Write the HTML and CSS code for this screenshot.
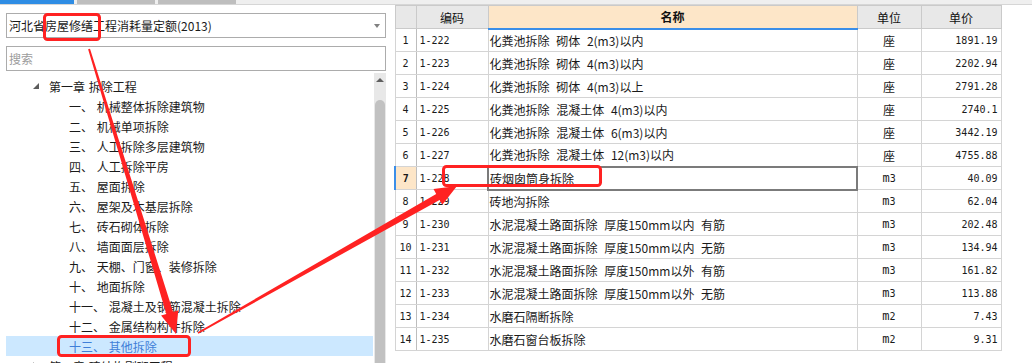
FILE: index.html
```html
<!DOCTYPE html>
<html lang="zh">
<head>
  <meta charset="UTF-8" />
  <title>定额库</title>
  <link rel="stylesheet" href="styles.css">
</head>
<body>

<div class="tabs">
  <span class="tab active"></span>
  <span class="tab"></span>
  <span class="tab"></span>
</div>

<div class="main">
  <!-- 左侧：定额库 + 章节树 -->
  <div class="left">
    <div class="combo">河北省房屋修缮工程消耗量定额(2013)<span class="combo-arrow"></span></div>
    <input class="search" type="text" placeholder="搜索">
    <div class="tree-wrap">
      <ul class="tree">
        <li class="chapter"><span class="toggle open"></span>第一章 拆除工程</li>
        <li class="item">一、 机械整体拆除建筑物</li>
        <li class="item">二、 机械单项拆除</li>
        <li class="item">三、 人工拆除多层建筑物</li>
        <li class="item">四、 人工拆除平房</li>
        <li class="item">五、 屋面拆除</li>
        <li class="item">六、 屋架及木基层拆除</li>
        <li class="item">七、 砖石砌体拆除</li>
        <li class="item">八、 墙面面层拆除</li>
        <li class="item">九、 天棚、门窗、装修拆除</li>
        <li class="item">十、 地面拆除</li>
        <li class="item">十一、 混凝土及钢筋混凝土拆除</li>
        <li class="item">十二、 金属结构构件拆除</li>
        <li class="item selected">十三、 其他拆除</li>
        <li class="chapter"><span class="toggle"></span>第二章 砖结构剔砌工程</li>
      </ul>
      <div class="vscroll">
        <span class="up"></span>
        <span class="thumb"></span>
      </div>
    </div>
  </div>

  <!-- 右侧：子目列表 -->
  <div class="right">
    <table class="grid">
      <colgroup>
        <col style="width:21px">
        <col style="width:72px">
        <col style="width:369px">
        <col style="width:64px">
        <col style="width:80px">
      </colgroup>
      <thead>
        <tr>
          <th></th>
          <th>编码</th>
          <th class="sel-col">名称</th>
          <th>单位</th>
          <th>单价</th>
        </tr>
      </thead>
      <tbody id="filas"></tbody>
    </table>
  </div>
</div>

<!-- 红色标注 -->
<svg class="marks" width="1032" height="363" viewBox="0 0 1032 363">
  <g fill="none" stroke="#ff2222" stroke-width="3">
    <rect x="44.5" y="14.5" width="55" height="25" rx="3" />
    <rect x="58.5" y="336.5" width="131" height="19" rx="3" />
    <rect x="443.5" y="166.5" width="157" height="19" rx="3" />
  </g>
  <g fill="#ff2222">
    <polygon points="88.1,49.3 90.0,48.7 173.1,311.9 178.3,310.3 176,334 161.1,315.5 166.3,313.9" />
    <polygon points="198.4,333.7 197.6,332.3 436.2,193.9 433.5,189.1 457,186 442.3,204.7 439.6,199.9" />
  </g>
</svg>

<script>
  const filas = [
    ["1-222", "化粪池拆除 砌体 2(m3)以内", "座", "1891.19"],
    ["1-223", "化粪池拆除 砌体 4(m3)以内", "座", "2202.94"],
    ["1-224", "化粪池拆除 砌体 4(m3)以上", "座", "2791.28"],
    ["1-225", "化粪池拆除 混凝土体 4(m3)以内", "座", "2740.1"],
    ["1-226", "化粪池拆除 混凝土体 6(m3)以内", "座", "3442.19"],
    ["1-227", "化粪池拆除 混凝土体 12(m3)以内", "座", "4755.88"],
    ["1-228", "砖烟囱筒身拆除", "m3", "40.09"],
    ["1-229", "砖地沟拆除", "m3", "62.04"],
    ["1-230", "水泥混凝土路面拆除 厚度150mm以内 有筋", "m3", "202.48"],
    ["1-231", "水泥混凝土路面拆除 厚度150mm以内 无筋", "m3", "134.94"],
    ["1-232", "水泥混凝土路面拆除 厚度150mm以外 有筋", "m3", "161.82"],
    ["1-233", "水泥混凝土路面拆除 厚度150mm以外 无筋", "m3", "113.88"],
    ["1-234", "水磨石隔断拆除", "m2", "7.43"],
    ["1-235", "水磨石窗台板拆除", "m2", "9.31"]
  ];

  const cuerpo = document.getElementById("filas");
  filas.forEach((f, i) => {
    const activa = i === 6;
    cuerpo.innerHTML += `
      <tr${activa ? ' class="current"' : ''}>
        <td class="n">${i + 1}</td>
        <td class="code">${f[0]}</td>
        <td class="name">${f[1]}</td>
        <td class="unit">${f[2]}</td>
        <td class="price">${f[3]}</td>
      </tr>`;
  });
</script>

</body>
</html>
```

FILE: styles.css
```css
* {
  box-sizing: border-box;
}

html,
body {
  margin: 0;
  padding: 0;
  overflow: hidden;
  background: #fff;
}

body {
  font-family: "Noto Sans CJK SC", "Noto Sans", sans-serif;
  font-size: 12px;
  color: #1a1a1a;
  width: 1032px;
  height: 363px;
  position: relative;
}

.tabs {
  display: flex;
  gap: 3px;
  height: 5px;
  background: #efefef;
  border-bottom: 1px solid #d6d6d6;
}

.tab {
  width: 78px;
  background: #bebebe;
}

.tab.active {
  width: 74px;
  background: #2f8de4;
}

.main {
  display: flex;
}

.left {
  width: 387px;
  padding: 8px 1px 0 6px;
}

.combo {
  display: flex;
  align-items: center;
  justify-content: space-between;
  height: 25px;
  padding: 0 5px 0 2px;
  border: 1px solid #acacac;
}

.combo-arrow {
  width: 0;
  height: 0;
  border-top: 4px solid #808080;
  border-left: 3px solid transparent;
  border-right: 3px solid transparent;
}

.search {
  display: block;
  width: 100%;
  height: 25px;
  margin: 8px 0 0;
  padding: 0 2px;
  border: 1px solid #acacac;
  font-family: "Noto Sans CJK SC", sans-serif;
  font-size: 12px;
  outline: none;
}

.search::placeholder {
  color: #9c9c9c;
}

.tree-wrap {
  display: flex;
  margin-top: 2px;
  height: 300px;
}

.tree {
  flex: 1;
  list-style: none;
  margin: 0;
  padding: 3px 0 0;
}

.tree li {
  display: flex;
  align-items: center;
  height: 20px;
  white-space: nowrap;
  word-spacing: 1px;
}

.chapter {
  padding-left: 27px;
}

.item {
  padding-left: 63px;
}

.item.selected {
  background: #cce8ff;
  color: #3f7fd8;
  margin-right: 1px;
}

.toggle {
  width: 0;
  height: 0;
  margin-right: 10px;
  border-left: 6px solid transparent;
  border-bottom: 6px solid #5c5c5c;
}

.toggle:not(.open) {
  border-left: 4px solid #8a8a8a;
  border-top: 4px solid transparent;
  border-bottom: 4px solid transparent;
  margin-right: 12px;
}

.vscroll {
  width: 12px;
  background: #e8e8e8;
  display: flex;
  flex-direction: column;
  align-items: center;
}

.vscroll .up {
  margin-top: 5px;
  width: 0;
  height: 0;
  border-bottom: 4px solid #5f5f5f;
  border-left: 4px solid transparent;
  border-right: 4px solid transparent;
}

.vscroll .thumb {
  flex: 1;
  width: 10px;
  margin-top: 18px;
  background: #c1c1c1;
  border-radius: 5px 5px 0 0;
}

.right {
  padding-left: 7px;
}

.grid {
  border-collapse: collapse;
  table-layout: fixed;
  width: 606px;
  font-size: 12px;
}

.grid th,
.grid td {
  height: 23px;
  padding: 0;
  border: 1px solid #d4d4d4;
  white-space: nowrap;
  overflow: hidden;
}

.grid th {
  background: #e8e8e8;
  font-weight: normal;
  color: #111;
  border-color: #cacaca;
}

.grid th.sel-col {
  background: #fde6c8;
  font-weight: bold;
  border-bottom: 2px solid #3b8ee8;
}

.grid td.n {
  text-align: center;
  font-family: "DejaVu Sans Mono", monospace;
  font-size: 10px;
  border-right-color: #bdbdbd;
}

.grid td.code {
  padding-left: 3px;
  font-family: "DejaVu Sans Mono", monospace;
  font-size: 10px;
}

.grid td.name {
  padding-left: 1px;
  word-spacing: 4px;
}

.grid td.unit {
  text-align: center;
  font-family: "DejaVu Sans Mono", "Noto Sans CJK SC", monospace;
  font-size: 10px;
}

.grid td.unit:first-letter {
  font-size: 12px;
}

.grid td.price {
  text-align: right;
  padding-right: 3px;
  font-family: "DejaVu Sans Mono", monospace;
  font-size: 10px;
}

.grid tr.current td.n {
  background: #fde6c8;
  font-weight: bold;
  border-left: 2px solid #3b8ee8;
}

.grid tr.current td.name {
  border: 2px solid #7b7b7b;
}

.marks {
  position: absolute;
  top: 0;
  left: 0;
  pointer-events: none;
}
```
